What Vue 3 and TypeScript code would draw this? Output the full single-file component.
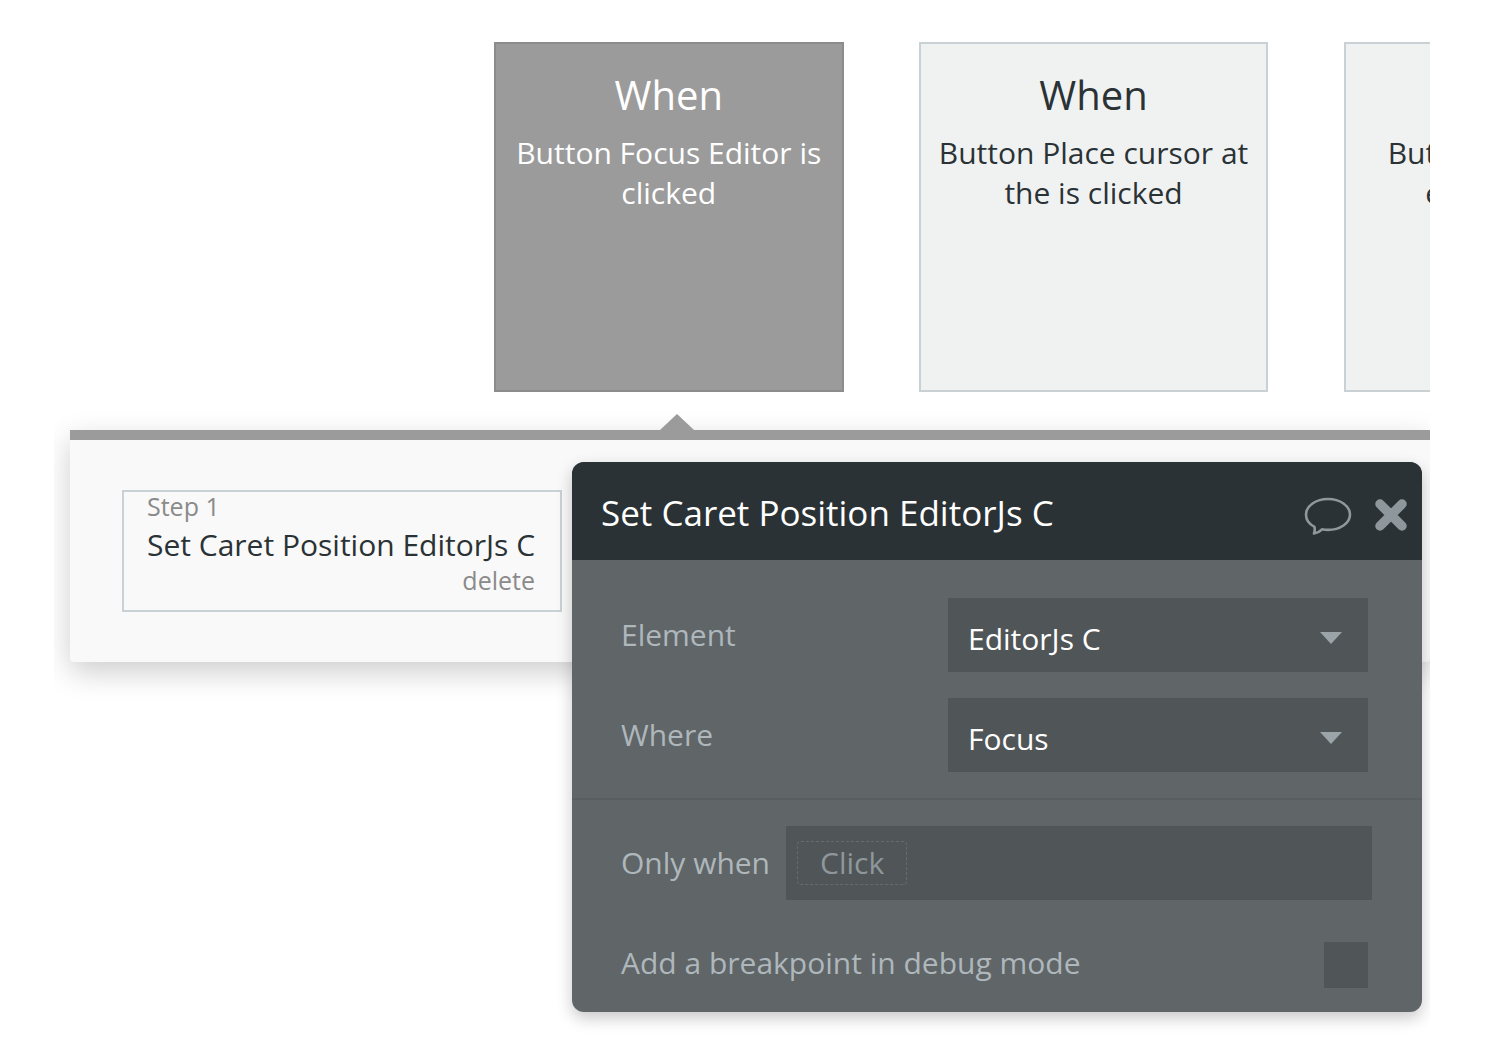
<script setup lang="ts">
interface Card { title: string; text: string; selected: boolean }
const cards: Card[] = [
  { title: 'When', text: 'Button Focus Editor is clicked', selected: true },
  { title: 'When', text: 'Button Place cursor at the is clicked', selected: false },
  { title: 'When', text: 'Button Set caret at end is clicked', selected: false },
]
</script>

<template>
  <div class="page">
    <div class="stage">
      <div class="cards">
        <div v-for="(c, i) in cards" :key="i" class="card" :class="{ selected: c.selected }">
          <div class="card-title">{{ c.title }}</div>
          <div class="card-text">{{ c.text }}</div>
        </div>
      </div>
      <div class="timeline">
        <div class="notch"></div>
        <div class="step">
          <div class="step-no">Step 1</div>
          <div class="step-name">Set Caret Position EditorJs C</div>
          <div class="step-del">delete</div>
        </div>
      </div>
      <div class="editor">
        <div class="ed-head">
          <div class="ed-title">Set Caret Position EditorJs C</div>
          <svg class="ed-comment" viewBox="0 0 48 42" width="48" height="42" fill="none">
            <path d="M10 38.5c3.2-.6 6-2 8-4.2 2 .4 4 .6 6 .6 12 0 22-6.600 22-15.400S36 4 24 4 2 10.700 2 19.500c0 5.300 3 9.600 8.500 12.300.4 2.400.2 4.700-.5 6.700z" stroke="#8e979b" stroke-width="2.600" stroke-linejoin="round"/>
          </svg>
          <svg class="ed-close" viewBox="0 0 34 34" width="34" height="34">
            <path d="M6 6 L28 28 M28 6 L6 28" stroke="#8e979b" stroke-width="9.500" stroke-linecap="round"/>
          </svg>
        </div>
        <div class="ed-body">
          <div class="ed-props">
            <div class="row">
              <span class="label">Element</span>
              <div class="select"><span>EditorJs C</span><i class="caret"></i></div>
            </div>
            <div class="row">
              <span class="label">Where</span>
              <div class="select"><span>Focus</span><i class="caret"></i></div>
            </div>
          </div>
          <div class="ed-cond">
            <div class="when">
              <span class="label">Only when</span>
              <div class="when-field"><span class="click">Click</span></div>
            </div>
            <div class="bp">
              <span class="label bp-label">Add a breakpoint in debug mode</span>
              <div class="check"></div>
            </div>
          </div>
        </div>
      </div>
    </div>
  </div>
</template>

<style scoped>
.page {
  height: 1058px;
  background: #fff;
  font-family: "Open Sans", sans-serif;
  overflow: hidden;
}
.stage {
  position: relative;
  margin-left: 54px;
  width: 1376px;
  height: 1058px;
  overflow: hidden;
}
.cards {
  display: flex;
  gap: 75.25px;
  padding: 42px 0 0 440px;
}
.card {
  flex: 0 0 349.5px;
  height: 349.5px;
  box-sizing: border-box;
  border: 2px solid #c9d1d5;
  background: #f0f2f2;
  color: #2b3235;
  text-align: center;
  padding: 25px 16px 0;
}
.card.selected {
  background: #9b9b9b;
  border-color: #8c8c8c;
  color: #fff;
}
.card-title {
  font-size: 40px;
  line-height: 52px;
}
.card-text {
  font-size: 30px;
  line-height: 40px;
  margin-top: 11.5px;
}
.timeline {
  position: relative;
  margin: 38.5px 0 0 16px;
  height: 232px;
  box-sizing: border-box;
  border-top: 10px solid #9b9b9b;
  background: #f9f9f9;
  border-radius: 0 0 4px 4px;
  box-shadow: 0 10px 30px rgba(0, 0, 0, 0.2);
  padding: 50px 0 0 52px;
}
.notch {
  position: absolute;
  top: -26px;
  left: 590px;
  width: 0;
  height: 0;
  border-left: 17px solid transparent;
  border-right: 17px solid transparent;
  border-bottom: 16px solid #9b9b9b;
}
.step {
  width: 440px;
  height: 122px;
  box-sizing: border-box;
  border: 2px solid #c9d1d5;
  padding: 0 25px 0 23px;
  color: #2b3235;
}
.step-no {
  font-size: 25px;
  line-height: 28px;
  color: #8a8a8a;
}
.step-name {
  font-size: 30px;
  line-height: 42px;
  margin-top: 4px;
  white-space: nowrap;
}
.step-del {
  font-size: 25px;
  line-height: 30px;
  margin-top: -1px;
  color: #8a8a8a;
  text-align: right;
}
.editor {
  position: absolute;
  left: 518px;
  top: 462px;
  width: 850px;
  height: 550px;
  border-radius: 12px;
  overflow: hidden;
  box-shadow: 0 6px 16px rgba(0, 0, 0, 0.22);
  display: flex;
  flex-direction: column;
  background: #606568;
}
.ed-head {
  flex: 0 0 98px;
  background: #2b3235;
  display: flex;
  align-items: center;
  padding: 0 14px 0 29px;
  color: #fff;
}
.ed-title {
  font-size: 35px;
  flex: 1;
  padding-top: 2px;
}
.ed-comment {
  margin: 10px 22px 0 0;
}
.ed-close {
  margin-top: 7px;
}
.ed-body {
  flex: 1;
  display: flex;
  flex-direction: column;
}
.ed-props {
  height: 240px;
  box-sizing: border-box;
  padding: 38px 54px 0 49px;
  display: flex;
  flex-direction: column;
  gap: 26px;
  border-bottom: 2px solid #595e61;
}
.row {
  display: flex;
  justify-content: space-between;
  align-items: center;
  height: 74px;
}
.label {
  font-size: 30px;
  color: #aeb7bc;
  padding-bottom: 2px;
}
.bp-label {
  padding-bottom: 6px;
}
.select {
  position: relative;
  width: 420px;
  height: 74px;
  background: #505558;
  color: #fff;
  font-size: 30px;
  line-height: 82px;
  padding-left: 20px;
  box-sizing: border-box;
}
.caret {
  position: absolute;
  right: 26px;
  top: 34px;
  width: 0;
  height: 0;
  border-left: 11px solid transparent;
  border-right: 11px solid transparent;
  border-top: 12px solid #9ba4a8;
}
.ed-cond {
  padding: 26px 50px 0 49px;
}
.when {
  display: flex;
  align-items: center;
  justify-content: space-between;
  height: 74px;
}
.when-field {
  width: 586px;
  height: 74px;
  background: #505558;
  display: flex;
  align-items: center;
  padding-left: 11px;
  box-sizing: border-box;
}
.click {
  font-size: 30px;
  line-height: 40px;
  padding: 1px 22px 1px 22px;
  color: #8e979b;
  border: 1px dashed #666b6e;
  border-radius: 4px;
}
.bp {
  display: flex;
  align-items: center;
  justify-content: space-between;
  margin-top: 42px;
  height: 46px;
  padding-right: 4px;
}
.check {
  width: 44px;
  height: 46px;
  background: #505558;
}
</style>
